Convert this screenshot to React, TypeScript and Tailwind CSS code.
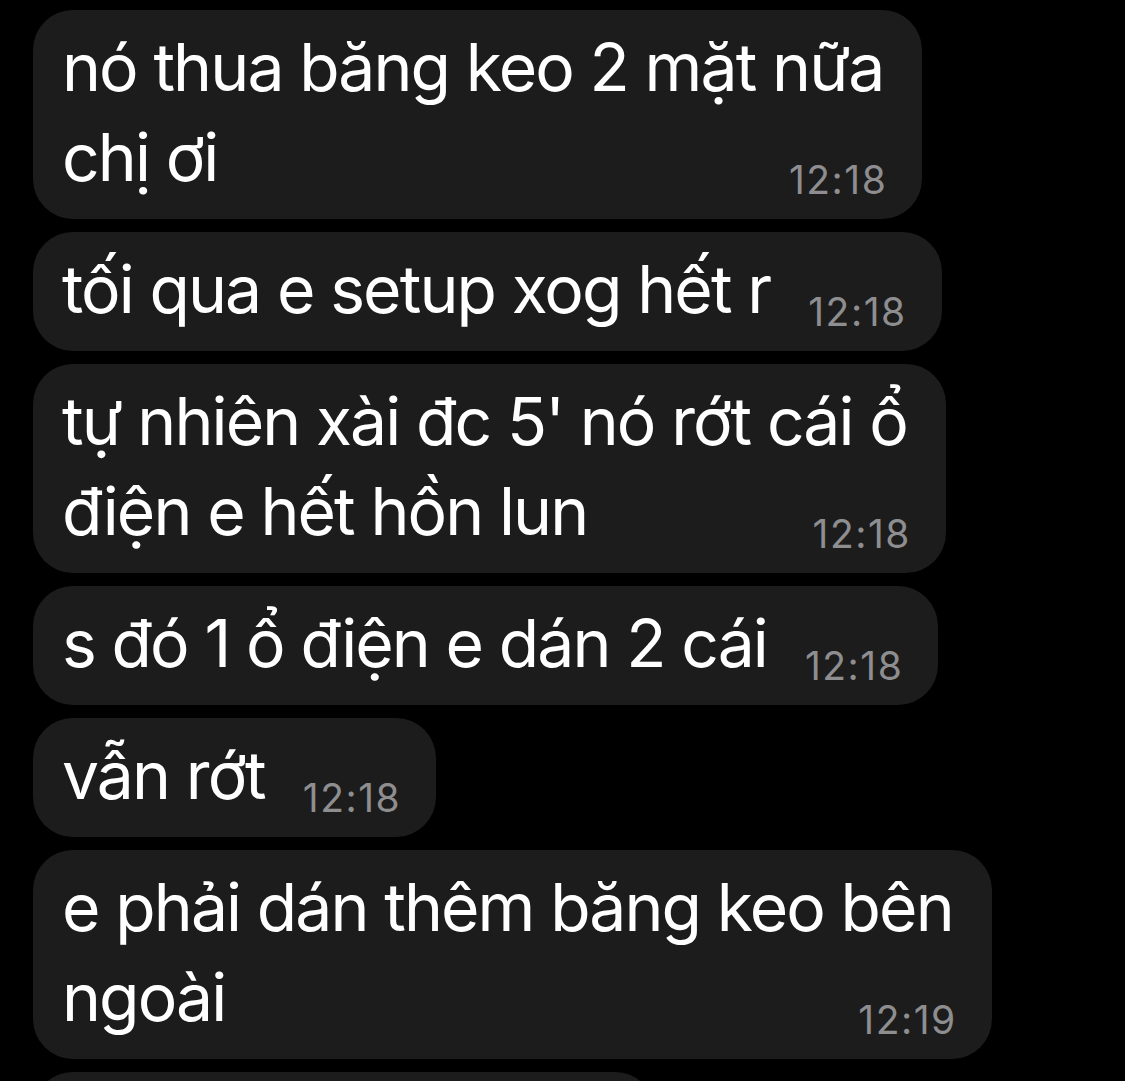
const messages = [
  { lines: ["nó thua băng keo 2 mặt nữa", "chị ơi"], time: "12:18" },
  { lines: ["tối qua e setup xog hết r"], time: "12:18" },
  { lines: ["tự nhiên xài đc 5' nó rớt cái ổ", "điện e hết hồn lun"], time: "12:18" },
  { lines: ["s đó 1 ổ điện e dán 2 cái"], time: "12:18" },
  { lines: ["vẫn rớt"], time: "12:18" },
  { lines: ["e phải dán thêm băng keo bên", "ngoài"], time: "12:19" },
];

function Bubble({ lines, time }: { lines: string[]; time: string }) {
  const head = lines.slice(0, -1);
  const last = lines[lines.length - 1];
  return (
    <div className="inline-flex flex-col self-start rounded-[40px] bg-[#1c1c1c] pb-[17px] pl-[29px] pr-[35px] pt-[12px]">
      {head.map((l) => (
        <div key={l} className="whitespace-nowrap pr-[4px]">
          {l}
        </div>
      ))}
      <div className="flex items-end justify-between whitespace-nowrap">
        <span>{last}</span>
        <span className="pl-[38px] text-[39px] leading-[44px] tracking-[1.5px] text-[#8e8e90]">{time}</span>
      </div>
    </div>
  );
}

export default function App() {
  return (
    <div
      className="flex h-[1081px] w-[1125px] flex-col gap-[13px] overflow-hidden bg-black pl-[33px] pt-[10px] text-[66px] leading-[90px] tracking-[-1.9px] text-white"
      style={{ fontFamily: "Inter, 'Noto Sans', sans-serif" }}
    >
      {messages.map((m, i) => (
        <Bubble key={i} lines={m.lines} time={m.time} />
      ))}
      <div className="h-[120px] w-[622px] shrink-0 rounded-[40px] bg-[#1c1c1c]" />
    </div>
  );
}
